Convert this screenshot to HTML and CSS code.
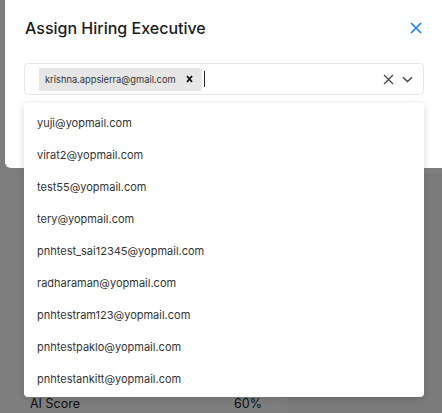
FILE: index.html
```html
<!DOCTYPE html>
<html>
<head>
<meta charset="utf-8">
<link rel="stylesheet" href="styles.css">
</head>
<body>
<div class="page">
  <div class="bg-card">
    <div class="bg-row"><span>AI Score</span><span>60%</span></div>
  </div>
  <div class="bg-side"></div>
</div>
<div class="overlay"></div>
<div class="modal">
  <div class="modal-head">
    <h2 class="modal-title">Assign Hiring Executive</h2>
    <button class="close-btn" aria-label="Close">
      <svg width="12" height="12" viewBox="0 0 12 12"><path d="M1 1L11 11M11 1L1 11" stroke="#1a7cf0" stroke-width="1.6" fill="none"/></svg>
    </button>
  </div>
  <div class="select">
    <div class="chips">
      <span class="chip">krishna.appsierra@gmail.com
        <svg class="chip-x" width="7" height="8" viewBox="0 0 7 8"><path d="M1 1L6 7M6 1L1 7" stroke="#111" stroke-width="1.8" fill="none"/></svg>
      </span>
      <span class="caret"></span>
    </div>
    <div class="select-icons">
      <svg width="11" height="11" viewBox="0 0 11 11"><path d="M1 1L10 10M10 1L1 10" stroke="#444" stroke-width="1.2" fill="none"/></svg>
      <svg width="11" height="7" viewBox="0 0 11 7"><path d="M1 1.2L5.5 5.5L10 1.2" stroke="#444" stroke-width="1.5" fill="none"/></svg>
    </div>
  </div>
</div>
<ul class="menu">
  <li>yuji@yopmail.com</li>
  <li>virat2@yopmail.com</li>
  <li>test55@yopmail.com</li>
  <li>tery@yopmail.com</li>
  <li>pnhtest_sai12345@yopmail.com</li>
  <li>radharaman@yopmail.com</li>
  <li>pnhtestram123@yopmail.com</li>
  <li>pnhtestpaklo@yopmail.com</li>
  <li>pnhtestankitt@yopmail.com</li>
</ul>
</body>
</html>
```
FILE: styles.css
```css
html, body {
  margin: 0;
  padding: 0;
}
body {
  width: 442px;
  height: 413px;
  overflow: hidden;
  position: relative;
  background: #fdfdfd;
  font-family: Inter, "Noto Sans", sans-serif;
}
.page {
  display: flex;
  gap: 10px;
  padding: 174px 0 0 14px;
  height: 100%;
  box-sizing: border-box;
}
.bg-card {
  width: 264px;
  background: #ffffff;
  border-radius: 6px;
  padding: 0 16px 0 16px;
  box-sizing: border-box;
  display: flex;
  flex-direction: column;
  justify-content: flex-end;
}
.bg-row {
  display: flex;
  justify-content: space-between;
  font-size: 12.5px;
  line-height: 16px;
  color: #222;
  padding-right: 0;
  margin-bottom: 1px;
}
.bg-side {
  flex: 1;
  background: #f6f6f6;
}
.overlay {
  position: absolute;
  inset: 0;
  background: rgba(0, 0, 0, 0.5);
}
.modal {
  position: absolute;
  left: 5px;
  top: -6px;
  width: 452px;
  height: 174px;
  background: #fff;
  border-radius: 6px;
  padding: 6px 0 0 19px;
  box-sizing: border-box;
}
.modal-head {
  display: flex;
  align-items: center;
  justify-content: space-between;
  width: 400px;
  height: 56px;
}
.modal-title {
  margin: 0;
  font-size: 16px;
  font-weight: 500;
  color: #1b1b1b;
  padding-left: 1px;
}
.close-btn {
  border: 0;
  background: none;
  padding: 0;
  margin-right: 2px;
  display: flex;
}
.select {
  margin-top: 7px;
  width: 400px;
  height: 32px;
  border: 1px solid #e6e6e6;
  border-radius: 4px;
  box-sizing: border-box;
  display: flex;
  align-items: center;
  justify-content: space-between;
  padding: 0 10px 0 14px;
}
.chips {
  display: flex;
  align-items: center;
  gap: 2px;
}
.chip {
  display: flex;
  align-items: center;
  gap: 10px;
  background: #e6e6e6;
  border-radius: 2px;
  height: 23px;
  padding: 0 9px 0 6px;
  font-size: 9.3px;
  color: #333;
}
.caret {
  width: 1px;
  height: 16px;
  background: #222;
}
.select-icons {
  display: flex;
  align-items: center;
  gap: 8px;
}
.menu {
  position: absolute;
  left: 24px;
  top: 103px;
  width: 400px;
  height: 294px;
  margin: 0;
  padding: 4px 0 0;
  box-sizing: border-box;
  list-style: none;
  background: #fff;
  border-radius: 4px;
  box-shadow: 0 2px 8px rgba(0, 0, 0, 0.15);
}
.menu li {
  height: 32px;
  line-height: 32px;
  padding-left: 13px;
  font-size: 11px;
  color: #333;
}
```
